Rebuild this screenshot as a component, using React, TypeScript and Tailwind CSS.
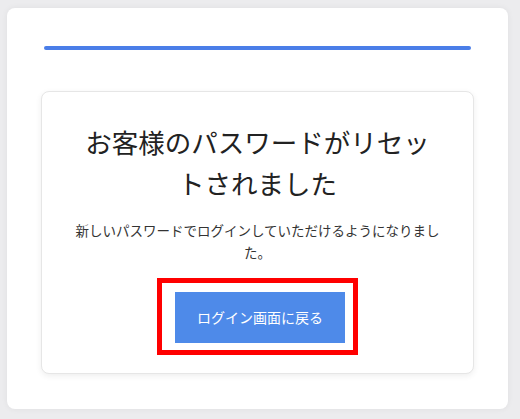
export default function App() {
  return (
    <div className="h-[419px] w-full bg-[#ececee] pt-[8px] pr-[12px] pb-[11px] pl-[7px] font-['Noto_Sans_CJK_JP','Noto_Sans',sans-serif]">
      <div className="flex flex-col rounded-lg bg-white px-[34px] pt-[38px] pb-[35px] shadow-[0_0_6px_rgba(0,0,0,0.06)]">
        <div className="mx-[3px] h-[4px] shrink-0 rounded-full bg-[#4a7ee8]" />

        <div className="mt-[41px] flex shrink-0 flex-col items-center rounded-lg border border-[#e6e6e6] bg-white px-8 pt-[29px] pb-[18px] shadow-[0_2px_6px_rgba(0,0,0,0.07)]">
          <h1 className="text-center text-[26.5px] font-normal leading-[41px] text-[#222]">
            お客様のパスワードがリセットされました
          </h1>
          <p className="mt-[16px] text-center text-[13.5px] leading-[22px] text-[#333]">
            新しいパスワードでログインしていただけるようになりました。
          </p>

          <div className="mt-[15px] border-[5px] border-[#ff0000] pt-[9px] pr-[8px] pb-[7px] pl-[13px]">
            <button className="flex h-[51px] w-[170px] items-center justify-center bg-[#4e8ae9] text-[14px] text-white">
              ログイン画面に戻る
            </button>
          </div>
        </div>
      </div>
    </div>
  )
}
